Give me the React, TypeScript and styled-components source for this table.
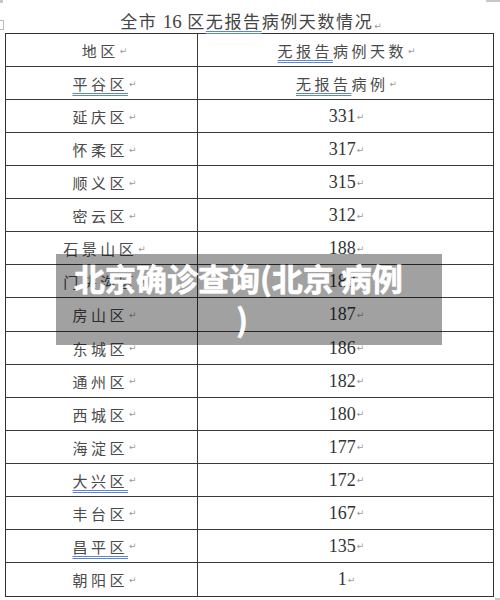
import React from "react";
import styled, { createGlobalStyle } from "styled-components";

const GlobalStyle = createGlobalStyle`
  html, body { margin: 0; padding: 0; background: #ffffff; }
  * { box-sizing: border-box; }
`;

const Page = styled.div`
  position: relative;
  width: 500px;
  height: 600px;
  overflow: hidden;
  background: #fff;
  font-family: "Noto Sans CJK SC", "Liberation Serif", serif;
`;

const Title = styled.div`
  height: 33px;
  padding-top: 8px;
  line-height: 25px;
  text-align: center;
  font-size: 17px;
  letter-spacing: 1.6px;
  color: #444;
  padding-left: 2px;
`;

const Num = styled.span`
  font-family: "Liberation Serif", serif;
  font-size: 19px;
  letter-spacing: 0;
`;

const Mark = styled.span`
  text-decoration: underline double #5b87d6;
  text-decoration-thickness: 1px;
  text-underline-offset: 3px;
`;

const Ret = styled.span`
  font-family: "DejaVu Sans", sans-serif;
  font-size: 9px;
  color: #9a9a9a;
  letter-spacing: 0;
  margin-left: 1px;
  vertical-align: -1px;
`;

const Table = styled.div`
  margin-left: 5px;
  width: 489px;
  height: 564px;
  display: grid;
  grid-template-columns: 192px 1fr;
  grid-template-rows: repeat(17, 1fr);
  border: 1px solid #333;
`;

const Cell = styled.div<{ $left?: boolean; $last?: boolean }>`
  display: flex;
  align-items: center;
  justify-content: center;
  border-bottom: ${(p) => (p.$last ? "none" : "1px solid #3a3a3a")};
  border-right: ${(p) => (p.$left ? "1px solid #3a3a3a" : "none")};
  color: #4a4a4a;
  font-size: 15px;
  letter-spacing: 3.5px;
  padding-left: ${(p) => (p.$left ? "6px" : "2px")};
  padding-top: 1px;
`;

const NumText = styled.span`
  font-family: "Liberation Serif", serif;
  font-size: 18px;
  letter-spacing: 0;
  color: #333;
`;

const Banner = styled.div`
  position: absolute;
  left: 56px;
  top: 254px;
  width: 386px;
  height: 91px;
  background: rgba(0, 0, 0, 0.37);
  padding: 3px 32px 0 18px;
  text-align: center;
  color: #fff;
  font-family: "Noto Sans CJK SC", "Noto Sans", sans-serif;
  font-weight: 700;
  font-size: 31px;
  line-height: 41px;
  -webkit-text-stroke: 0.6px #fff;
  white-space: break-spaces;
`;

const Corner = styled.div<{ $x: number; $y: number; $w: number; $h: number }>`
  position: absolute;
  left: ${(p) => p.$x}px;
  top: ${(p) => p.$y}px;
  width: ${(p) => p.$w}px;
  height: ${(p) => p.$h}px;
  background: #c8c8c8;
`;

const Handle = styled.div`
  position: absolute;
  left: 0;
  top: 20px;
  width: 4px;
  height: 10px;
  border: 1px solid #bbb;
  border-left: none;
`;

type Row = { name: React.ReactNode; value: React.ReactNode };

const rows: Row[] = [
  { name: <>地区</>, value: <><Mark>无报告</Mark>病例天数</> },
  { name: <Mark>平谷区</Mark>, value: <><Mark>无报告</Mark>病例</> },
  { name: "延庆区", value: <NumText>331</NumText> },
  { name: "怀柔区", value: <NumText>317</NumText> },
  { name: "顺义区", value: <NumText>315</NumText> },
  { name: "密云区", value: <NumText>312</NumText> },
  { name: "石景山区", value: <NumText>188</NumText> },
  { name: "门头沟区", value: <NumText>188</NumText> },
  { name: "房山区", value: <NumText>187</NumText> },
  { name: "东城区", value: <NumText>186</NumText> },
  { name: "通州区", value: <NumText>182</NumText> },
  { name: "西城区", value: <NumText>180</NumText> },
  { name: "海淀区", value: <NumText>177</NumText> },
  { name: <Mark>大兴区</Mark>, value: <NumText>172</NumText> },
  { name: "丰台区", value: <NumText>167</NumText> },
  { name: <Mark>昌平区</Mark>, value: <NumText>135</NumText> },
  { name: "朝阳区", value: <NumText>1</NumText> },
];

export default function App() {
  return (
    <>
      <GlobalStyle />
      <Page>
        <Corner $x={0} $y={0} $w={3} $h={3} />
        <Corner $x={486} $y={0} $w={14} $h={2} />
        <Corner $x={495} $y={598} $w={5} $h={2} />
        <Handle />
        <Title>
          全市 <Num>16</Num> 区<Mark>无报告</Mark>病例天数情况<Ret>↵</Ret>
        </Title>
        <Table>
          {rows.map((r, i) => {
            const last = i === rows.length - 1;
            return (
              <React.Fragment key={i}>
                <Cell $left $last={last}>
                  {r.name}
                  <Ret>↵</Ret>
                </Cell>
                <Cell $last={last}>
                  {r.value}
                  <Ret>↵</Ret>
                </Cell>
              </React.Fragment>
            );
          })}
        </Table>
        <Banner>北京确诊查询(北京 病例 )</Banner>
      </Page>
    </>
  );
}
